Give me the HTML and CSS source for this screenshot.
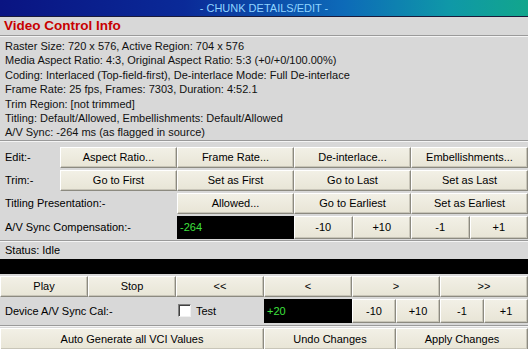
FILE: index.html
```html
<!DOCTYPE html>
<html lang="en">

<head>
    <meta charset="UTF-8">
    <title>Chunk Details/Edit</title>
    <link rel="stylesheet" href="styles.css">
</head>

<body>
    <div class="panel">
        <div class="titlebar">- CHUNK DETAILS/EDIT -</div>

        <h1 class="heading">Video Control Info</h1>
        <div class="separator"></div>

        <!-- VCI summary -->
        <div class="info">
            <div>Raster Size: 720 x 576, Active Region: 704 x 576</div>
            <div>Media Aspect Ratio: 4:3, Original Aspect Ratio: 5:3 (+0/+0/100.00%)</div>
            <div>Coding: Interlaced (Top-field-first), De-interlace Mode: Full De-interlace</div>
            <div>Frame Rate: 25 fps, Frames: 7303, Duration: 4:52.1</div>
            <div>Trim Region: [not trimmed]</div>
            <div>Titling: Default/Allowed, Embellishments: Default/Allowed</div>
            <div>A/V Sync: -264 ms (as flagged in source)</div>
        </div>
        <div class="separator"></div>

        <div class="row row-edit row-first">
            <span class="label">Edit:-</span>
            <button class="btn">Aspect Ratio...</button>
            <button class="btn">Frame Rate...</button>
            <button class="btn">De-interlace...</button>
            <button class="btn">Embellishments...</button>
        </div>

        <div class="row row-edit">
            <span class="label">Trim:-</span>
            <button class="btn">Go to First</button>
            <button class="btn">Set as First</button>
            <button class="btn">Go to Last</button>
            <button class="btn">Set as Last</button>
        </div>

        <div class="row row-titling">
            <span class="label">Titling Presentation:-</span>
            <button class="btn">Allowed...</button>
            <button class="btn">Go to Earliest</button>
            <button class="btn">Set as Earliest</button>
        </div>

        <div class="row row-sync">
            <span class="label">A/V Sync Compensation:-</span>
            <div class="readout">-264</div>
            <button class="btn">-10</button>
            <button class="btn">+10</button>
            <button class="btn">-1</button>
            <button class="btn">+1</button>
        </div>
        <div class="separator"></div>

        <div class="status">Status: Idle</div>
        <div class="monitor"></div>

        <div class="row row-transport">
            <button class="btn">Play</button>
            <button class="btn">Stop</button>
            <button class="btn">&lt;&lt;</button>
            <button class="btn">&lt;</button>
            <button class="btn">&gt;</button>
            <button class="btn">&gt;&gt;</button>
        </div>

        <div class="row row-device">
            <span class="label">Device A/V Sync Cal:-</span>
            <label class="check"><span class="box"></span>Test</label>
            <div class="readout">+20</div>
            <button class="btn">-10</button>
            <button class="btn">+10</button>
            <button class="btn">-1</button>
            <button class="btn">+1</button>
        </div>
        <div class="separator"></div>

        <div class="row row-actions">
            <button class="btn">Auto Generate all VCI Values</button>
            <button class="btn">Undo Changes</button>
            <button class="btn">Apply Changes</button>
        </div>
    </div>
</body>

</html>
```

FILE: styles.css
```css
/* Global Styles */
body {
    margin: 0;
    background-color: #d8d8d8;
    font-family: Tahoma, 'Liberation Sans', Arial, sans-serif;
    font-size: 11px;
    color: #000;
}

.panel {
    width: 528px;
    height: 349px;
    overflow: hidden;
    background-color: #d8d8d8;
}

/* Title Bar */
.titlebar {
    height: 16px;
    line-height: 16px;
    text-align: center;
    color: #8fd4ff;
    font-size: 11px;
    background: linear-gradient(to right, #0a1482 0%, #0a2a98 35%, #0d6ab8 65%, #0f98a8 85%, #12a68c 100%);
    border-bottom: 1px solid #1a1a3a;
}

.heading {
    margin: 0;
    height: 18px;
    line-height: 18px;
    padding-left: 4px;
    font-size: 13.5px;
    font-weight: bold;
    color: #c80000;
}

.separator {
    height: 0;
    border-top: 1px solid #9a9a9a;
    border-bottom: 1px solid #f4f4f4;
}

/* Info Lines */
.info {
    padding: 2px 0 0 5px;
    line-height: 14.4px;
    white-space: nowrap;
    color: #111;
}

/* Button Rows */
.row {
    display: grid;
    align-items: stretch;
    margin-top: 2px;
}

.row-first {
    margin-top: 5px;
}

.row-edit {
    grid-template-columns: 60px repeat(4, 1fr);
    height: 21px;
}

.row-titling {
    grid-template-columns: 177px repeat(3, 1fr);
    height: 21px;
}

.row-sync {
    grid-template-columns: 177px 117px repeat(4, 1fr);
    height: 23px;
    margin-bottom: 1px;
}

.row-transport {
    grid-template-columns: repeat(6, 1fr);
    height: 21px;
}

.row-device {
    grid-template-columns: 176px 88px 88px repeat(4, 1fr);
    height: 24px;
    margin-bottom: 2px;
}

.row-actions {
    grid-template-columns: 264px 132px 1fr;
    height: 22px;
    margin-top: 1px;
}

.label {
    display: flex;
    align-items: center;
    padding-left: 5px;
    white-space: nowrap;
}

.btn {
    margin: 0;
    padding: 0;
    font-family: inherit;
    font-size: 11px;
    color: #000;
    background: linear-gradient(to bottom, #f2f0e6, #e8e5d6);
    border: 1px solid;
    border-color: #ffffff #8c8a80 #8c8a80 #ffffff;
    box-shadow: inset -1px -1px 0 #c8c5b8;
}

.readout {
    display: flex;
    align-items: center;
    padding-left: 3px;
    background-color: #000;
    color: #3ee03e;
}

/* Status */
.status {
    height: 17px;
    line-height: 17px;
    padding-left: 5px;
}

.monitor {
    height: 15px;
    background-color: #000;
}

/* Checkbox */
.check {
    display: flex;
    align-items: center;
    gap: 5px;
    padding-left: 2px;
}

.box {
    width: 11px;
    height: 11px;
    background-color: #fff;
    border: 1px solid;
    border-color: #808080 #f0f0f0 #f0f0f0 #808080;
    box-shadow: inset 1px 1px 0 #404040;
}
```
